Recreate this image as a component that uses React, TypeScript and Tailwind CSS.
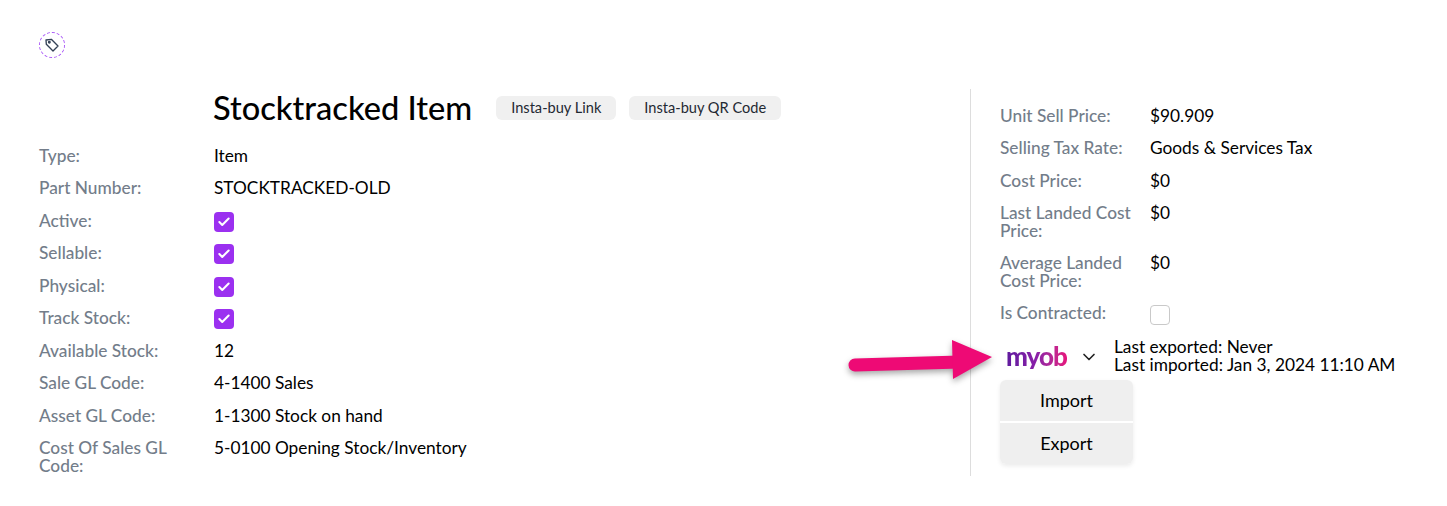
import React from "react";
import { Check, ChevronDown } from "lucide-react";

const labelClass = "text-[#737d8a] font-medium leading-[18px]";

const CheckBox = ({ checked }: { checked: boolean }) =>
  checked ? (
    <span className="flex h-5 w-5 items-center justify-center rounded-[4px] bg-[#9b30f0]">
      <Check size={14} color="white" strokeWidth={3.5} />
    </span>
  ) : (
    <span className="block h-5 w-5 rounded-[4px] border border-[#c9c9c9] bg-white" />
  );

const LeftRow = ({ label, children, h = "h-[32.5px]" }: { label: string; children: React.ReactNode; h?: string }) => (
  <div className={`flex items-start ${h}`}>
    <div className={`w-[175px] pr-6 pt-[7px] ${labelClass}`}>{label}</div>
    <div className="pt-[7px] leading-[18px] text-black">{children}</div>
  </div>
);

const RightRow = ({ label, children, h = "h-[32.5px]" }: { label: string; children: React.ReactNode; h?: string }) => (
  <div className={`flex items-start ${h}`}>
    <div className={`w-[150px] pr-3 pt-[7px] ${labelClass}`}>{label}</div>
    <div className="pt-[7px] leading-[18px] text-black">{children}</div>
  </div>
);

export default function App() {
  return (
    <div className="relative h-[506px] w-[1447px] overflow-hidden bg-white font-['Lato',sans-serif] text-[17.3px]">
      <div className="pl-[39px] pt-[32px]">
        <div className="flex h-[26px] w-[26px] items-center justify-center rounded-full border-[1.5px] border-dashed border-[#a855f7]">
          <svg width="16" height="16" viewBox="0 0 24 24" fill="none" stroke="#334155" strokeWidth="2" strokeLinejoin="round" strokeLinecap="round">
            <path d="M3 4.5 L11 3.5 L21 13.5 L13.5 21 L3.5 11 Z" />
            <circle cx="8" cy="8" r="1.2" />
          </svg>
        </div>
      </div>

      <div className="flex pt-[31px]">
        <div className="w-[970px] pl-[39px] pt-[2px]">
          <div className="flex h-[34px] items-center pl-[174px]">
            <h1 className="text-[32.6px] font-medium leading-none text-black">Stocktracked Item</h1>
            <button className="ml-6 h-6 rounded-md bg-[#f0f0f0] px-[15px] text-[14.6px] text-[#1f2933]">Insta-buy Link</button>
            <button className="ml-[13px] h-6 rounded-md bg-[#f0f0f0] px-[15px] text-[14.6px] text-[#1f2933]">Insta-buy QR Code</button>
          </div>
          <div className="mt-[14.5px]">
            <LeftRow label="Type:">Item</LeftRow>
            <LeftRow label="Part Number:">STOCKTRACKED-OLD</LeftRow>
            <LeftRow label="Active:"><CheckBox checked /></LeftRow>
            <LeftRow label="Sellable:"><CheckBox checked /></LeftRow>
            <LeftRow label="Physical:"><CheckBox checked /></LeftRow>
            <LeftRow label="Track Stock:"><CheckBox checked /></LeftRow>
            <LeftRow label="Available Stock:">12</LeftRow>
            <LeftRow label="Sale GL Code:">4-1400 Sales</LeftRow>
            <LeftRow label="Asset GL Code:">1-1300 Stock on hand</LeftRow>
            <LeftRow label="Cost Of Sales GL Code:" h="h-[50px]">5-0100 Opening Stock/Inventory</LeftRow>
          </div>
        </div>

        <div className="h-[387px] w-[1px] bg-[#dddddd]" />

        <div className="pl-[29px] pt-[10.5px]">
          <RightRow label="Unit Sell Price:">$90.909</RightRow>
          <RightRow label="Selling Tax Rate:">Goods &amp; Services Tax</RightRow>
          <RightRow label="Cost Price:">$0</RightRow>
          <RightRow label="Last Landed Cost Price:" h="h-[50px]">$0</RightRow>
          <RightRow label="Average Landed Cost Price:" h="h-[50px]">$0</RightRow>
          <RightRow label="Is Contracted:"><div className="pt-[1px]"><CheckBox checked={false} /></div></RightRow>

          <div className="mt-[8.5px] flex items-center">
            <div className="flex w-[114px] items-center pl-[6px]">
              <span className="bg-gradient-to-r from-[#5f1a9e] via-[#8a1fa8] to-[#e6127c] bg-clip-text text-[26px] font-black leading-none tracking-[-1px] text-transparent">myob</span>
              <ChevronDown size={20} className="ml-[12px] mt-[2px] text-[#222]" />
            </div>
            <div className="leading-[18px] text-black">
              <div>Last exported: Never</div>
              <div>Last imported: Jan 3, 2024 11:10 AM</div>
            </div>
          </div>

          <div className="mt-[6px] w-[133px] rounded-md shadow-[0_2px_4px_rgba(0,0,0,0.08)]">
            <button className="block h-[41px] w-full rounded-t-md bg-[#efefef] text-[18px] text-black">Import</button>
            <div className="h-[2px] bg-white" />
            <button className="block h-[41px] w-full rounded-b-md bg-[#efefef] text-[18px] text-black">Export</button>
          </div>
        </div>
      </div>

      {/* annotation arrow lying over the page */}
      <svg className="absolute left-[845px] top-[335px] drop-shadow-[0_3px_3px_rgba(0,0,0,0.35)]" width="150" height="50" viewBox="0 0 150 50" fill="none">
        <path d="M10 30 L115 27" stroke="#ee0a75" strokeWidth="13" strokeLinecap="round" />
        <path d="M107 5 L147 22 L108 44 Z" fill="#ee0a75" />
      </svg>
    </div>
  );
}
